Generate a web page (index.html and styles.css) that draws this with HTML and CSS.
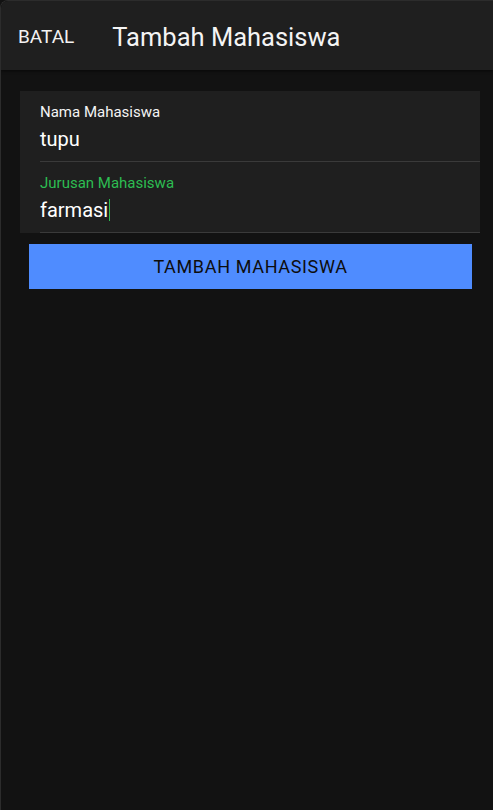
FILE: index.html
```html
<!DOCTYPE html>
<html>
<head>
<meta charset="utf-8">
<link rel="stylesheet" href="styles.css">
</head>
<body>
<div class="modal">
  <header class="toolbar">
    <button class="cancel">BATAL</button>
    <h1 class="title">Tambah Mahasiswa</h1>
  </header>
  <main class="content">
    <div class="card">
      <div class="field">
        <div class="label">Nama Mahasiswa</div>
        <div class="value">tupu</div>
      </div>
      <div class="field">
        <div class="label focused">Jurusan Mahasiswa</div>
        <div class="value">farmasi<span class="caret"></span></div>
      </div>
    </div>
    <button class="submit">TAMBAH MAHASISWA</button>
  </main>
</div>
</body>
</html>
```
FILE: styles.css
```css
html, body {
  margin: 0;
  padding: 0;
  height: 100%;
  background: #121212;
  font-family: Roboto, "Liberation Sans", sans-serif;
}
.modal {
  height: 100%;
  box-sizing: border-box;
  border: 1px solid #2c2c2c;
  border-bottom: none;
  border-right: none;
  border-top-left-radius: 8px;
  overflow: hidden;
  background: #121212;
}
.toolbar {
  height: 69px;
  background: #1f1f1f;
  display: flex;
  align-items: center;
  box-shadow: 0 1px 3px rgba(0,0,0,0.6);
  position: relative;
}
.cancel {
  background: none;
  border: none;
  color: #f2f2f2;
  font-family: inherit;
  font-size: 19px;
  font-weight: 400;
  padding: 0;
  margin-left: 17px;
  margin-top: 1px;
}
.title {
  margin: 2px 0 0 38px;
  font-size: 25.5px;
  font-weight: 400;
  color: #f4f4f4;
}
.content {
  padding: 21px 13px 0 19px;
}
.card {
  background: #1f1f1f;
  padding-left: 20px;
}
.field {
  padding: 11px 0 8px 0;
  border-bottom: 1px solid #3a3a3a;
}
.label {
  font-size: 15px;
  line-height: 20px;
  color: #f4f4f4;
}
.label.focused {
  color: #2dbd52;
}
.value {
  margin-top: 3px;
  font-size: 20px;
  line-height: 28px;
  color: #ffffff;
  display: flex;
  align-items: center;
}
.caret {
  display: inline-block;
  width: 1px;
  height: 22px;
  background: #2dbd52;
  margin-left: 1px;
}
.submit {
  display: block;
  box-sizing: border-box;
  width: 443px;
  height: 45px;
  margin: 11px 0 0 9px;
  background: #4f8cff;
  border: none;
  color: #0d0d0d;
  font-family: inherit;
  font-size: 18px;
  letter-spacing: 0.65px;
  padding: 0;
}
```
